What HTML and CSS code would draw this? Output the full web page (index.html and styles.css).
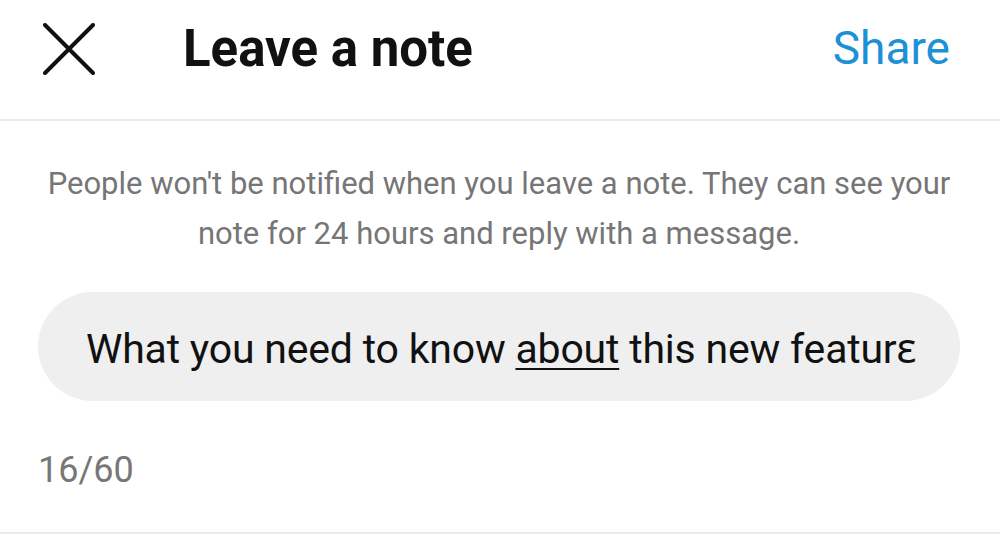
FILE: index.html
```html
<!DOCTYPE html>
<html>
<head>
<meta charset="utf-8">
<link rel="stylesheet" href="styles.css">
</head>
<body>
<div class="screen">
  <header class="topbar">
    <button class="close" aria-label="Close">
      <svg width="52" height="52" viewBox="0 0 52 52"><path d="M2 2 L50 50 M50 2 L2 50" stroke="#111" stroke-width="4" stroke-linecap="round" fill="none"/></svg>
    </button>
    <h1 class="title">Leave a note</h1>
    <span class="share">Share</span>
  </header>
  <main class="content">
    <p class="info">People won't be notified when you leave a note. They can see your<br>note for 24 hours and reply with a message.</p>
    <div class="pill"><span class="note">What you need to know <u>about</u> this new featur&#603;</span></div>
    <div class="count">16/60</div>
  </main>
</div>
</body>
</html>
```
FILE: styles.css
```css
html, body { margin: 0; padding: 0; background: #fff; }
body { font-family: Roboto, "Noto Sans", sans-serif; width: 1000px; height: 542px; overflow: hidden; }
.screen { display: flex; flex-direction: column; height: 534px; }
.topbar { height: 121px; flex: none; border-bottom: 2px solid #ebebeb; display: flex; align-items: center; padding: 0 50px 22px 43px; box-sizing: border-box; }
.close { background: none; border: 0; padding: 0; width: 52px; height: 52px; }
.close svg { display: block; }
.title { margin: 0 0 0 88px; font-size: 51px; font-weight: 700; color: #111; flex: 1; line-height: 1.17; }
.share { font-size: 46px; color: #1e90d6; line-height: 1.17; }
.content { flex: 1; border-bottom: 2px solid #ebebeb; padding: 0 40px 0 38px; }
.info { margin: 38px 0 0; text-align: center; color: #767676; font-size: 31px; line-height: 50px; white-space: nowrap; }
.pill { margin-top: 33px; height: 109px; border-radius: 55px; background: #efefef; display: flex; align-items: center; padding-left: 48px; }
.note { font-size: 41px; color: #111; letter-spacing: -0.2px; white-space: nowrap; }
.note u { text-underline-offset: 5px; text-decoration-thickness: 2px; }
.count { margin-top: 48px; font-size: 36px; color: #777; line-height: 1.17; }
```
